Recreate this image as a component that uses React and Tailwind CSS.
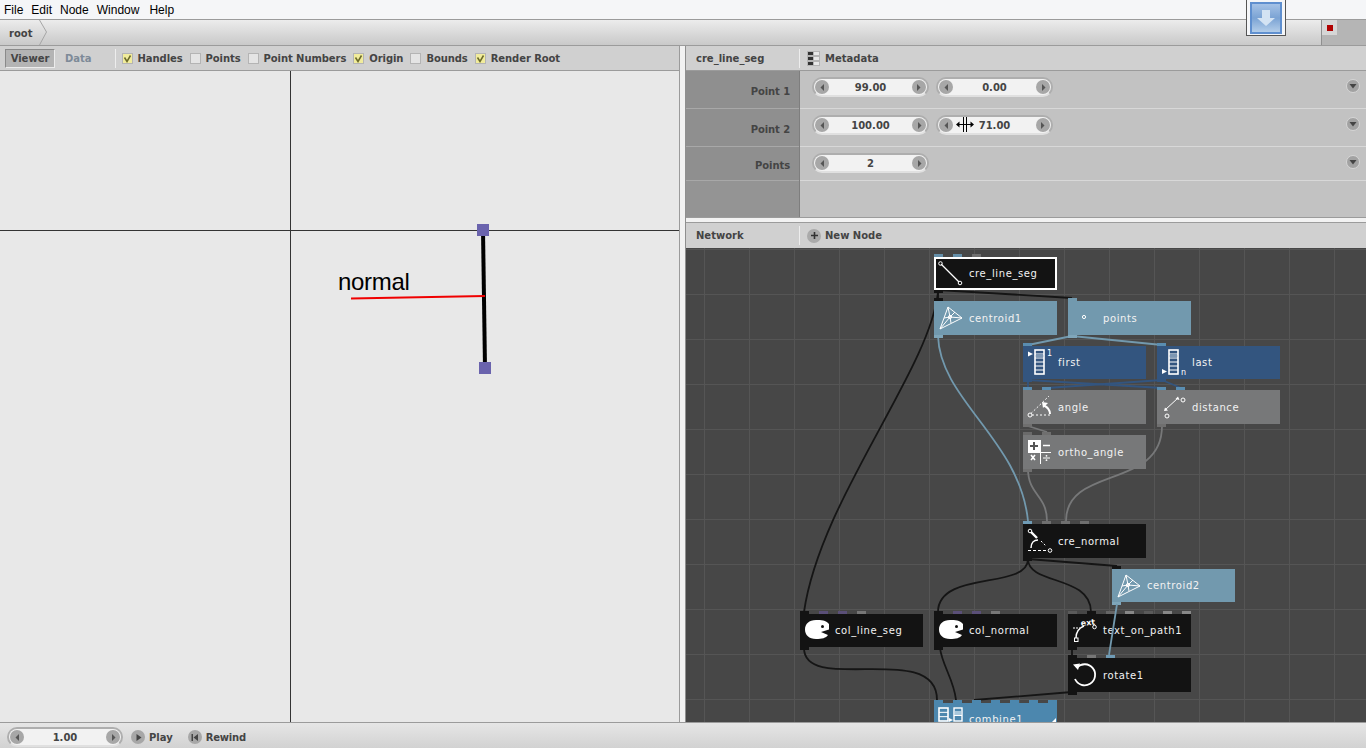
import React from 'react';

const barFont = "font-['DejaVu_Sans',Verdana,sans-serif]";

function Check({ on, label }) {
  return (
    <div className="flex items-center gap-[5px]">
      <div className={`flex h-[11px] w-[11px] items-center justify-center border border-[#b4b4b4] ${on ? 'bg-[#f1ec9c]' : 'bg-[#e4e4e4]'}`}>
        {on && (
          <svg width="9" height="9" viewBox="0 0 9 9">
            <path d="M1.5 3.5 L4 7.5 L7.5 1.5" fill="none" stroke="#6b6b2a" strokeWidth="1.5" />
          </svg>
        )}
      </div>
      <span className="text-[10px] font-bold tracking-[-0.08px] text-[#444]">{label}</span>
    </div>
  );
}

function RoundIcon({ children, className = '' }) {
  return (
    <div className={`flex h-[14px] w-[14px] items-center justify-center rounded-full bg-[#a7a7a7] ${className}`}>
      <svg width="9" height="9" viewBox="0 0 9 9">{children}</svg>
    </div>
  );
}

function Spinner({ value, width = 'w-[117px]', cursor }) {
  return (
    <div className={`relative flex h-[20px] items-center justify-between rounded-full border-2 border-[#aeaeae] border-b-[#e0e0e0] bg-[#f2f2f2] px-[1px] ${width}`}>
      <RoundIcon><path d="M6 1 L2.5 4.5 L6 8 Z" fill="#555" /></RoundIcon>
      <span className="text-[10px] font-bold text-[#444]">{value}</span>
      <RoundIcon><path d="M3 1 L6.5 4.5 L3 8 Z" fill="#555" /></RoundIcon>
      {cursor && (
        <svg className="absolute left-[18px] top-[0px]" width="18" height="16" viewBox="0 0 18 16">
          <path d="M7.5 0 V15 M10.5 0 V15 M1 7.5 H17" stroke="#000" strokeWidth="1" fill="none" />
          <path d="M0 7.5 L3.5 4.5 V10.5 Z M18 7.5 L14.5 4.5 V10.5 Z" fill="#000" />
        </svg>
      )}
    </div>
  );
}

function ParamRow({ label, height, labelPad = 'pt-[13px]', spinners }) {
  return (
    <div className={`flex ${height}`}>
      <div className={`flex w-[113px] justify-end border-b border-[#a8a8a8] bg-[#8f8f8f] pr-[9px] ${labelPad}`}>
        <span className="text-[10px] font-bold tracking-[-0.1px] text-[#444]">{label}</span>
      </div>
      <div className="w-[1px] bg-[#7e7e7e]" />
      <div className="flex flex-1 items-start gap-[7px] border-b border-[#d8d8d8] bg-[#c2c2c2] pl-[12px] pr-[6px] pt-[6px]">
        {spinners}
        <div className="ml-auto mt-[2px] flex h-[14px] w-[14px] items-center justify-center rounded-full border border-[#d6d6d6] bg-[#a2a2a2]">
          <svg width="8" height="6" viewBox="0 0 8 6"><path d="M0.5 1 H7.5 L4 5.5 Z" fill="#444" /></svg>
        </div>
      </div>
    </div>
  );
}

// node icons are drawn in the node's own 34x34 box
const List = ({ x, y, h, n }) => (
  <g>
    <rect x={x} y={y} width="9" height={h} fill="none" stroke="#fff" strokeWidth="1.6" />
    {Array.from({ length: n }).map((_, i) => (
      <line key={i} x1={x} x2={x + 9} y1={y + ((i + 1) * h) / (n + 1)} y2={y + ((i + 1) * h) / (n + 1)} stroke="#fff" strokeWidth="1" />
    ))}
  </g>
);

const Pacman = () => (
  <g>
    <path d="M29 10 C26 6 21 6 16 6 C9 6 5 10 5 15.5 C5 21 9 25 16 25 C22 25 26 24 28 21 L21 18 L29 15.5 Z" fill="#fff" />
    <circle cx="22.5" cy="12.5" r="1.5" fill="#111" />
  </g>
);

const Centroid = () => (
  <g fill="none" stroke="#fff" strokeWidth="1">
    <path d="M14 6 L28 17 L6 28 Z" />
    <path d="M16 16 L14 6 M16 16 L28 17 M16 16 L6 28 M16 16 L21 11 M16 16 L17 22 M16 16 L10 17" />
    <circle cx="16" cy="16" r="1.6" />
  </g>
);

const icons = {
  line: (
    <g fill="none" stroke="#fff">
      <line x1="7" y1="7" x2="25" y2="25" strokeWidth="1.3" />
      <circle cx="6.5" cy="6.5" r="1.8" />
      <circle cx="26" cy="26" r="1.8" />
    </g>
  ),
  centroid: <Centroid />,
  point: <circle cx="16" cy="16" r="1.6" fill="none" stroke="#fff" />,
  first: (
    <g>
      <List x={12} y={4} h={24} n={5} />
      <rect x="13" y="8" width="7" height="3.5" fill="#7d97b3" />
      <path d="M5 5.5 L10 8 L5 10.5 Z" fill="#fff" />
      <text x="24" y="10" fontSize="8" fill="#fff">1</text>
    </g>
  ),
  last: (
    <g>
      <List x={12} y={4} h={24} n={5} />
      <rect x="13" y="8" width="7" height="3.5" fill="#7d97b3" />
      <path d="M5 23 L10 25.5 L5 28 Z" fill="#fff" />
      <text x="24" y="29" fontSize="8" fill="#fff">n</text>
    </g>
  ),
  angle: (
    <g fill="none" stroke="#fff">
      <circle cx="7" cy="25" r="2" />
      <path d="M9 25 H28 M8 23.5 L26 6" strokeDasharray="2 2" />
      <path d="M27 24 C27 20 24 17 21 15.5" strokeWidth="2" />
      <path d="M19 12 L25 13 L20 18 Z" fill="#fff" stroke="none" />
    </g>
  ),
  distance: (
    <g fill="none" stroke="#fff">
      <circle cx="26" cy="10" r="2" />
      <circle cx="10" cy="26" r="2" />
      <path d="M8 20 L21 8" strokeWidth="1" />
      <path d="M21 6.5 L22.5 10 L18.5 9 Z M7 21 L11 20.5 L8 17.5 Z" fill="#fff" stroke="none" />
    </g>
  ),
  math: (
    <g>
      <rect x="5" y="5" width="12" height="12" fill="#fff" />
      <path d="M11 7 V15 M7 11 H15" stroke="#555" strokeWidth="2" />
      <path d="M5 17.5 H28 M17.5 5 V29" stroke="#fff" strokeWidth="1" />
      <path d="M20 10.5 H27" stroke="#fff" strokeWidth="1.5" />
      <path d="M8 20 L12 25 M12 20 L8 25" stroke="#fff" strokeWidth="1.6" />
      <path d="M20 23 H27" stroke="#fff" strokeWidth="1" />
      <circle cx="23.5" cy="20.8" r="0.9" fill="#fff" />
      <circle cx="23.5" cy="25.2" r="0.9" fill="#fff" />
    </g>
  ),
  normal: (
    <g fill="none" stroke="#fff">
      <circle cx="7" cy="7" r="1.8" />
      <path d="M8 8 L14 14" strokeWidth="2.4" />
      <path d="M8 24 C8 19 11 16 15 16" strokeWidth="1.5" />
      <path d="M18 17 L23 22" strokeDasharray="2 2" />
      <path d="M5 26.5 H24" strokeDasharray="3 2" />
      <circle cx="27" cy="26.5" r="1.8" />
    </g>
  ),
  pacman: <Pacman />,
  text: (
    <g fill="none" stroke="#fff">
      <path d="M8 24 C8 18 11 14 16 12" strokeWidth="1.4" />
      <rect x="6.5" y="24" width="3.5" height="3.5" />
      <circle cx="26.5" cy="13" r="1.8" />
      <path d="M5 14 H12" strokeDasharray="2 1" />
      <text x="13" y="12" fontSize="8" fontWeight="700" fill="#fff" stroke="none" transform="rotate(-6 13 12)">ext</text>
    </g>
  ),
  rotate: (
    <g fill="none" stroke="#fff">
      <path d="M9 9.5 A10.5 10.5 0 1 1 7 21" strokeWidth="1.8" />
      <path d="M5 6.5 L12 5.5 L10 12 Z" fill="#fff" stroke="none" />
    </g>
  ),
  combine: (
    <g>
      <List x={5} y={5} h={13} n={2} />
      <rect x="20" y="5" width="8" height="13" fill="none" stroke="#fff" strokeWidth="1.4" />
      <rect x="21" y="8" width="6" height="4" fill="#a9c8dc" />
      <path d="M20 12.5 H28" stroke="#fff" />
      <path d="M15 15 L19 17 L15 19 Z" fill="#fff" />
    </g>
  ),
};

const black = 'bg-[#131313]';
const steel = 'bg-[#7299ae]';
const navy = 'bg-[#33557f]';
const gray = 'bg-[#777879]';

const nodes = [
  { name: 'cre_line_seg', icon: 'line', pos: 'left-[248px] top-[9px]', bg: black, out: 'bg-[#131313]', selected: true, ports: ['bg-[#648fa9]', 'bg-[#648fa9]', 'bg-[#6f6f6f]'] },
  { name: 'centroid1', icon: 'centroid', pos: 'left-[248px] top-[53px]', bg: steel, out: 'bg-[#7fa6ba]', ports: ['bg-[#131313]'] },
  { name: 'points', icon: 'point', pos: 'left-[382px] top-[53px]', bg: steel, out: 'bg-[#7fa6ba]', ports: ['bg-[#7299ae]'] },
  { name: 'first', icon: 'first', short: true, pos: 'left-[337px] top-[98px]', bg: navy, out: 'bg-[#33557f]', ports: ['bg-[#5a8db0]'] },
  { name: 'last', icon: 'last', short: true, pos: 'left-[471px] top-[98px]', bg: navy, out: 'bg-[#33557f]', ports: ['bg-[#5a8db0]'] },
  { name: 'angle', icon: 'angle', pos: 'left-[337px] top-[142px]', bg: gray, out: 'bg-[#6f6f6f]', ports: ['bg-[#5a8db0]', 'bg-[#5a8db0]'] },
  { name: 'distance', icon: 'distance', pos: 'left-[471px] top-[142px]', bg: gray, out: 'bg-[#6f6f6f]', ports: ['bg-[#5a8db0]', 'bg-[#5a8db0]'] },
  { name: 'ortho_angle', icon: 'math', pos: 'left-[337px] top-[187px]', bg: gray, out: 'bg-[#6f6f6f]', ports: ['bg-[#6a6a6a]', 'bg-[#6f6f6f]'] },
  { name: 'cre_normal', icon: 'normal', pos: 'left-[337px] top-[276px]', bg: black, out: 'bg-[#131313]', ports: ['bg-[#6f9bb5]', 'bg-[#6f6f6f]', 'bg-[#6f6f6f]', 'bg-[#6f6f6f]'] },
  { name: 'centroid2', icon: 'centroid', short: true, pos: 'left-[426px] top-[321px]', bg: steel, out: 'bg-[#7fa6ba]', ports: ['bg-[#131313]'] },
  { name: 'col_line_seg', icon: 'pacman', short: true, pos: 'left-[114px] top-[366px]', bg: black, out: 'bg-[#131313]', ports: ['bg-[#131313]', 'bg-[#5a4f78]', 'bg-[#5a4f78]', 'bg-[#777]'] },
  { name: 'col_normal', icon: 'pacman', short: true, pos: 'left-[248px] top-[366px]', bg: black, out: 'bg-[#131313]', ports: ['bg-[#131313]', 'bg-[#5a4f78]', 'bg-[#5a4f78]', 'bg-[#777]'] },
  { name: 'text_on_path1', icon: 'text', short: true, pos: 'left-[382px] top-[366px]', bg: black, out: 'bg-[#131313]', ports: ['bg-[#5a5a5a]', 'bg-[#131313]', 'bg-[#666]', 'bg-[#888]', 'bg-[#5a5a5a]', 'bg-[#888]', 'bg-[#888]'] },
  { name: 'rotate1', icon: 'rotate', pos: 'left-[382px] top-[410px]', bg: black, out: 'bg-[#131313]', ports: ['bg-[#131313]', 'bg-[#777]', 'bg-[#6f9bb5]'] },
  { name: 'combine1', icon: 'combine', short: true, pos: 'left-[248px] top-[455px]', bg: 'bg-[#4c87ae]', out: 'bg-[#4c87ae]', corner: true, ports: ['bg-[#4c87ae]', 'bg-[#4c87ae]', 'bg-[#4c87ae]', 'bg-[#4c87ae]', 'bg-[#4c87ae]', 'bg-[#4c87ae]', 'bg-[#4c87ae]'] },
];

function Node({ node }) {
  const tall = !node.selected && !node.short;
  return (
    <div className={`absolute w-[123px] ${tall ? 'h-[34px]' : 'h-[33px]'} ${node.pos} ${node.bg} ${node.selected ? 'border-2 border-white' : ''}`}>
      <div className={`absolute flex gap-[10px] ${node.selected ? '-left-[2px] -top-[5px]' : 'left-0 -top-[3px]'}`}>
        {node.ports.map((p, i) => (
          <div key={i} className={`h-[3px] w-[9px] ${p}`} />
        ))}
      </div>
      <div className={`absolute h-[3px] w-[9px] ${node.out} ${node.selected ? '-left-[2px] -bottom-[5px]' : 'left-0 -bottom-[3px]'}`} />
      <svg className={`absolute ${node.selected ? '-left-[2px] -top-[2px]' : 'left-0 top-0'}`} width="34" height="34" viewBox="0 0 34 34">
        {icons[node.icon]}
      </svg>
      <span className={`absolute whitespace-nowrap text-[10px] tracking-[0.6px] text-[#f2f2f2] ${node.selected ? 'left-[33px] -top-[2px] leading-[33px]' : 'left-[35px] top-0'} ${tall ? 'leading-[35px]' : ''} ${node.short ? 'leading-[33px]' : ''}`}>
        {node.name}
      </span>
      {node.corner && <div className="absolute right-[1px] top-[15px] h-0 w-0 border-b-[5px] border-l-[5px] border-b-white border-l-transparent" />}
    </div>
  );
}

const wire = (d, color, w = 1.8) => <path d={d} fill="none" stroke={color} strokeWidth={w} />;

function Wires() {
  return (
    <svg className="absolute inset-0" width="680" height="474" viewBox="686 248 680 474">
      {wire('M938 292 C930 370 820 500 804 612', '#151515')}
      {wire('M938 290 L1072 298', '#151515')}
      {wire('M938 290 L938 300', '#151515')}
      {wire('M938 336 C940 400 1020 440 1028 521', '#7299ae')}
      {wire('M1072 336 L1028 345', '#7299ae')}
      {wire('M1072 336 L1162 345', '#7299ae')}
      {wire('M1028 380 L1028 388', '#33557f')}
      {wire('M1028 380 L1162 388', '#33557f')}
      {wire('M1162 380 L1047 388', '#33557f')}
      {wire('M1162 380 L1181 388', '#33557f')}
      {wire('M1028 426 L1047 432', '#777879')}
      {wire('M1162 426 C1162 490 1066 465 1066 521', '#777879')}
      {wire('M1028 469 C1028 495 1047 495 1047 521', '#777879')}
      {wire('M1028 559 L1117 566', '#151515')}
      {wire('M1028 559 C1028 590 938 570 938 612', '#151515')}
      {wire('M1028 559 C1028 585 1091 575 1091 612', '#151515')}
      {wire('M1072 648 L1072 656', '#151515')}
      {wire('M804 648 C804 695 937 640 937 700', '#151515')}
      {wire('M940 648 C942 665 954 680 956 700', '#151515')}
      {wire('M1072 692 L974 700', '#151515')}
    </svg>
  );
}

export default function App() {
  return (
    <div className={`relative flex h-[748px] w-[1366px] flex-col overflow-hidden bg-[#e8e8e8] ${barFont}`}>
      <div className="flex h-[19px] items-center gap-[8px] bg-[#f5f6f8] pl-[4px] font-['Liberation_Sans',Arial,sans-serif] text-[12px] text-black">
        <span>File</span>
        <span>Edit</span>
        <span>Node</span>
        <span>Window</span>
        <span className="ml-[2px]">Help</span>
      </div>

      <div className="flex h-[27px] items-center border-y border-[#9b9b9b] bg-linear-to-b from-[#ececec] to-[#c9c9c9] pl-[9px]">
        <span className="pt-[1px] text-[10px] font-bold text-[#444]">root</span>
        <svg className="ml-[7px]" width="9" height="25" viewBox="0 0 9 25">
          <path d="M0.5 0 L7.5 12 L0.5 25" fill="none" stroke="#a5a5a5" />
        </svg>
        <div className="ml-auto flex h-[25px] w-[45px] items-start justify-start self-end border-l border-[#8f8f8f] bg-[#b5b5b5]">
          <div className="flex h-[15px] w-[15px] items-center justify-center bg-[#d6d6d6]">
            <div className="h-[6px] w-[6px] bg-[#b00000]" />
          </div>
        </div>
      </div>

      <div className="flex min-h-0 flex-1">
        <div className="flex w-[680px] flex-col border-r border-[#9b9b9b]">
          <div className="flex h-[25px] items-center border-b border-[#9b9b9b] bg-[#d0d0d0] pl-[5px]">
            <div className="flex h-[19px] w-[50px] items-center justify-center border border-[#8a8a8a] border-b-[#ececec] border-r-[#ececec] bg-[#b4b4b4] text-[10px] font-bold text-[#444]">
              Viewer
            </div>
            <span className="ml-[10px] text-[10px] font-bold text-[#7d8a98]">Data</span>
            <div className="ml-[23px] mr-[6px] h-[19px] w-[1px] bg-[#ededed]" />
            <div className="flex items-center gap-[7px]">
              <Check on label="Handles" />
              <Check label="Points" />
              <Check label="Point Numbers" />
              <Check on label="Origin" />
              <Check label="Bounds" />
              <Check on label="Render Root" />
            </div>
          </div>
          <svg className="min-h-0 flex-1" width="679" height="651" viewBox="0 71 679 651">
            <path d="M290.5 71 V722 M0 230.5 H680" stroke="#333" strokeWidth="1" fill="none" />
            <text x="338" y="290" fontFamily="'Liberation Sans',Arial,sans-serif" fontSize="24" letterSpacing="-0.3" fill="#000">normal</text>
            <path d="M483 230 L485 368" stroke="#000" strokeWidth="4" fill="none" />
            <path d="M351 298.5 L485 296" stroke="#f00000" strokeWidth="2" fill="none" />
            <rect x="477" y="224" width="12" height="12" fill="#6a63ad" />
            <rect x="479" y="362" width="12" height="12" fill="#6a63ad" />
          </svg>
        </div>

        <div className="flex w-[6px] border-r border-[#8f8f8f] bg-[#f2f2f2]" />

        <div className="flex flex-1 flex-col">
          <div className="flex h-[25px] items-center border-b border-[#9b9b9b] bg-[#d0d0d0]">
            <span className="w-[113px] pl-[10px] text-[10px] font-bold text-[#444]">cre_line_seg</span>
            <div className="h-[19px] w-[1px] bg-[#ededed]" />
            <div className="ml-[7px] grid h-[15px] w-[13px] grid-cols-2 gap-x-[1px] gap-y-[2px] bg-[#b5b5b5] p-[1px]">
              <div className="bg-[#333]" />
              <div className="bg-[#e8e8e8]" />
              <div className="bg-[#333]" />
              <div className="bg-[#e8e8e8]" />
              <div className="bg-[#333]" />
              <div className="bg-[#e8e8e8]" />
            </div>
            <span className="ml-[5px] text-[10px] font-bold text-[#444]">Metadata</span>
          </div>
          <ParamRow
            label="Point 1"
            height="h-[38px]"
            spinners={<><Spinner value="99.00" /><Spinner value="0.00" /></>}
          />
          <ParamRow
            label="Point 2"
            height="h-[38px]"
            spinners={<><Spinner value="100.00" /><Spinner value="71.00" cursor /></>}
          />
          <ParamRow label="Points" height="h-[34px]" labelPad="pt-[11px]" spinners={<Spinner value="2" />} />
          <div className="flex h-[36px]">
            <div className="w-[113px] bg-[#949494]" />
            <div className="w-[1px] bg-[#7e7e7e]" />
            <div className="flex-1 bg-[#c2c2c2]" />
          </div>
          <div className="h-[6px] border-y border-[#9b9b9b] bg-[#f2f2f2]" />
          <div className="flex h-[25px] items-center bg-[#d0d0d0]">
            <span className="w-[113px] pl-[10px] text-[10px] font-bold text-[#444]">Network</span>
            <div className="h-[19px] w-[1px] bg-[#ededed]" />
            <div className="ml-[7px] flex h-[14px] w-[14px] items-center justify-center rounded-full bg-[#aaa]">
              <svg width="9" height="9" viewBox="0 0 9 9"><path d="M4.5 1 V8 M1 4.5 H8" stroke="#333" strokeWidth="1.6" /></svg>
            </div>
            <span className="ml-[4px] text-[10px] font-bold text-[#444]">New Node</span>
          </div>
          <div className="relative min-h-0 flex-1 overflow-hidden bg-[#474747] bg-[linear-gradient(#555_1px,transparent_1px),linear-gradient(90deg,#555_1px,transparent_1px)] bg-[size:45px_45px] bg-[position:18px_1px]">
            <Wires />
            {nodes.map((n) => (
              <Node key={n.name} node={n} />
            ))}
            {/* this one wire runs on top of text_on_path1 */}
            <svg className="absolute inset-0" width="680" height="474" viewBox="686 248 680 474">
              {wire('M1117 604 L1109 655', '#7299ae')}
            </svg>
          </div>
        </div>
      </div>

      <div className="flex h-[26px] items-center gap-[4px] border-t border-[#9b9b9b] bg-linear-to-b from-[#e6e6e6] to-[#d2d2d2] pl-[7px] pt-[3px]">
        <Spinner value="1.00" width="w-[116px]" />
        <RoundIcon className="ml-[4px]"><path d="M2.5 1 L7.5 4.5 L2.5 8 Z" fill="#444" /></RoundIcon>
        <span className="text-[10px] font-bold text-[#444]">Play</span>
        <RoundIcon className="ml-[11px]"><path d="M1.5 1 H3 V8 H1.5 Z M8 1 L3.5 4.5 L8 8 Z" fill="#444" /></RoundIcon>
        <span className="text-[10px] font-bold tracking-[-0.2px] text-[#444]">Rewind</span>
      </div>

      <div className="absolute left-[1246px] -top-[1px] flex h-[37px] w-[40px] items-center justify-center border border-[#555] bg-[#f5f6f8]">
        <div className="flex h-[32px] w-[32px] items-center justify-center border-2 border-[#5f8fcf] bg-linear-to-b from-[#a5c2e6] via-[#7ba3d4] to-[#b3cde9]">
          <svg width="20" height="20" viewBox="0 0 20 20"><path d="M6 2 H14 V10 H19 L10 18 L1 10 H6 Z" fill="#d4e3f3" /></svg>
        </div>
      </div>
    </div>
  );
}
